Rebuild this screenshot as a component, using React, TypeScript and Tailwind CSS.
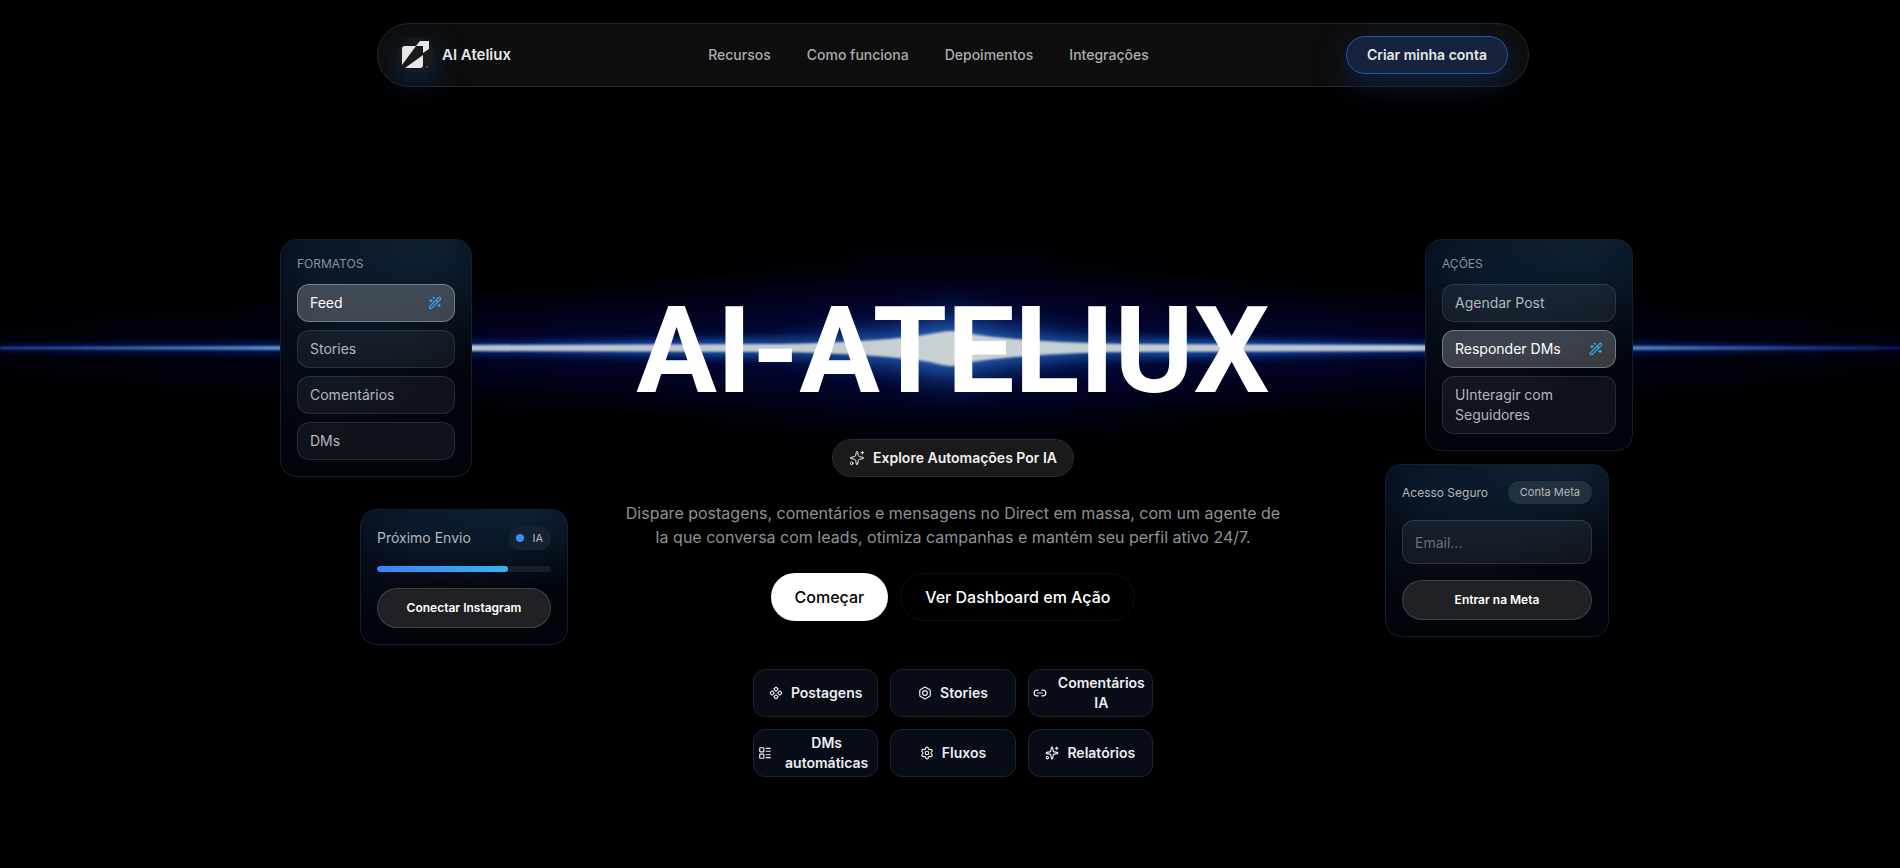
import React from "react";
import {
  Bolt,
  Component,
  LayoutList,
  Link2,
  Settings,
  Sparkles,
  WandSparkles,
} from "lucide-react";

const navLinks = ["Recursos", "Como funciona", "Depoimentos", "Integrações"];

const features = [
  { label: "Postagens", icon: Component },
  { label: "Stories", icon: Bolt },
  { label: "Comentários IA", icon: Link2 },
  { label: "DMs automáticas", icon: LayoutList },
  { label: "Fluxos", icon: Settings },
  { label: "Relatórios", icon: Sparkles },
];

const cardStyle =
  "rounded-2xl border border-[#161d2b] p-4 bg-[radial-gradient(ellipse_90%_60%_at_75%_0%,#0d2134_0%,transparent_100%),radial-gradient(ellipse_70%_70%_at_25%_15%,#081424_0%,transparent_100%)] bg-[#02040b]";

const Logo = () => (
  <span className="flex h-9 w-9 items-center justify-center rounded-full bg-[#1a1a1a] shadow-[0_8px_30px_#0f2c58]">
    <svg viewBox="0 0 36 36" className="h-9 w-9" aria-hidden="true">
      <path
        d="M7 9H18L4 28V12Q4 9 7 9zM22 4H31V12L25 16V9H18zM25 18V28Q25 31 22 31H7z"
        fill="#e5e7eb"
      />
      <circle cx="29" cy="30" r="1" fill="#55585e" />
    </svg>
  </span>
);

const Beam = () => (
  <svg
    className="pointer-events-none absolute inset-x-0 top-[198px] h-[300px] w-full"
    viewBox="0 0 1900 300"
    preserveAspectRatio="none"
    aria-hidden="true"
  >
    <defs>
      <radialGradient id="halo">
        <stop offset="0" stopColor="#020c5c" stopOpacity="0.75" />
        <stop offset="0.35" stopColor="#020636" stopOpacity="0.6" />
        <stop offset="1" stopColor="#000010" stopOpacity="0" />
      </radialGradient>
      <radialGradient id="flare">
        <stop offset="0" stopColor="#3f86cc" />
        <stop offset="0.4" stopColor="#1c4a98" stopOpacity="0.8" />
        <stop offset="0.7" stopColor="#06205e" stopOpacity="0.45" />
        <stop offset="1" stopColor="#02081f" stopOpacity="0" />
      </radialGradient>
      <linearGradient id="edge">
        <stop offset="0" stopColor="#0a1c7a" />
        <stop offset="0.25" stopColor="#06309a" />
        <stop offset="0.5" stopColor="#1a63b4" />
        <stop offset="0.75" stopColor="#06309a" />
        <stop offset="1" stopColor="#06104a" />
      </linearGradient>
      <linearGradient id="core">
        <stop offset="0" stopColor="#2450a8" />
        <stop offset="0.14" stopColor="#5f97cf" />
        <stop offset="0.25" stopColor="#b9c2ca" />
        <stop offset="0.5" stopColor="#c9d1d4" />
        <stop offset="0.74" stopColor="#b9c6d0" />
        <stop offset="0.87" stopColor="#4a7fc4" />
        <stop offset="1" stopColor="#0f1f80" />
      </linearGradient>
      <filter id="soft" x="-10%" y="-100%" width="120%" height="300%">
        <feGaussianBlur stdDeviation="1" />
      </filter>
      <filter id="softer" x="-10%" y="-100%" width="120%" height="300%">
        <feGaussianBlur stdDeviation="4" />
      </filter>
    </defs>
    <ellipse cx="951" cy="150" rx="1250" ry="75" fill="url(#halo)" />
    <ellipse cx="951" cy="150" rx="800" ry="85" fill="url(#halo)" />
    <ellipse cx="951" cy="150" rx="400" ry="120" fill="url(#halo)" />
    <path
      d="M0 148L500 145L951 136L1400 145L1900 148V152L1400 155L951 164L500 155L0 152z"
      fill="url(#edge)"
      filter="url(#softer)"
    />
    <ellipse cx="951" cy="150" rx="220" ry="46" fill="url(#flare)" />
    <ellipse cx="951" cy="150" rx="90" ry="70" fill="url(#flare)" opacity="0.5" />
    <path
      d="M0 149L300 148L470 147L780 146Q880 144 930 136Q945 133 951 133Q957 133 972 136Q1022 144 1122 146L1430 147L1640 148L1900 149V151L1640 152L1430 153L1122 154Q1022 156 972 164Q957 168 951 168Q945 168 930 164Q880 156 780 154L470 153L300 152L0 151z"
      fill="url(#core)"
      filter="url(#soft)"
    />
  </svg>
);

type OptionCardProps = {
  title: string;
  options: string[];
  active: string;
  width: string;
};

const OptionCard = ({ title, options, active, width }: OptionCardProps) => (
  <div className={`${cardStyle} ${width}`}>
    <p className="mb-3 text-xs uppercase text-[#8d929b]">{title}</p>
    <div className="flex flex-col gap-2">
      {options.map((option) => (
        <button
          key={option}
          type="button"
          className={`flex w-full items-center justify-between rounded-xl border px-3 py-2 text-left text-sm ${
            option === active
              ? "border-white/30 bg-white/22 text-white"
              : "border-white/10 bg-white/6 text-[#b4b7bc]"
          }`}
        >
          {option}
          {option === active && (
            <WandSparkles className="h-3.5 w-3.5 text-[#38a9f8]" />
          )}
        </button>
      ))}
    </div>
  </div>
);

const Header = () => (
  <header className="mx-auto flex h-16 w-full max-w-6xl items-center justify-between rounded-full border border-[#27272a] bg-[#0d0d0d] px-5">
    <a href="#" className="flex items-center gap-2">
      <Logo />
      <span className="text-[15px] font-semibold text-[#e5e7eb]">
        AI Ateliux
      </span>
    </a>
    <nav className="flex items-center gap-9">
      {navLinks.map((link) => (
        <a key={link} href="#" className="text-sm font-medium text-[#a9adb3]">
          {link}
        </a>
      ))}
    </nav>
    <button
      type="button"
      className="h-[38px] rounded-full border border-[#2457a8] bg-[#17233c] px-5 text-sm font-semibold text-[#e5e7eb] shadow-[0_8px_30px_#0e2444]"
    >
      Criar minha conta
    </button>
  </header>
);

const App = () => {
  return (
    <div className="relative min-h-screen overflow-hidden bg-black pt-[23px] pl-1.5 font-[Inter,sans-serif]">
      <Beam />
      <div className="relative">
        <Header />
        <main className="mx-auto mt-[152px] flex w-full max-w-[1360px] items-start">
          <aside className="flex w-[296px] shrink-0 flex-col items-start gap-8 pl-[7px]">
            <OptionCard
              title="Formatos"
              options={["Feed", "Stories", "Comentários", "DMs"]}
              active="Feed"
              width="w-48"
            />
            <div className={`${cardStyle} ml-20 w-52`}>
              <div className="mb-4 flex items-center justify-between">
                <p className="text-sm text-[#b4b7bc]">Próximo Envio</p>
                <span className="flex h-6 items-center gap-2 rounded-full bg-[#142131] px-2 text-[11px] text-[#b4b7bc]">
                  <span className="h-2 w-2 rounded-full bg-[#3b8cf6]" />
                  IA
                </span>
              </div>
              <div className="mb-4 h-1.5 overflow-hidden rounded-full bg-white/8">
                <div className="h-full w-3/4 rounded-full bg-linear-to-r from-[#3b82f6] to-[#38b2ee]" />
              </div>
              <button
                type="button"
                className="h-10 w-full rounded-full border border-white/14 bg-[#202125] text-xs font-semibold text-white"
              >
                Conectar Instagram
              </button>
            </div>
          </aside>

          <section className="flex min-w-0 flex-1 flex-col items-center pt-[52px] text-center">
            <h1 className="font-[Roboto,sans-serif] text-[120px] leading-[120px] font-bold text-white">
              AI-ATELIUX
            </h1>
            <button
              type="button"
              className="mt-7 flex h-[38px] items-center gap-2 rounded-full border border-[#2c2c2e] bg-[#1a1a1a] px-4 text-sm font-semibold text-[#f1f1f3]"
            >
              <Sparkles className="h-4 w-4" strokeWidth={1.5} />
              Explore Automações Por IA
            </button>
            <p className="mt-6 w-[672px] text-base text-[#8f9196]">
              Dispare postagens, comentários e mensagens no Direct em massa, com
              um agente de Ia que conversa com leads, otimiza campanhas e mantém
              seu perfil ativo 24/7.
            </p>
            <div className="mt-6 flex items-center gap-3">
              <button
                type="button"
                className="h-12 rounded-full bg-white px-6 text-base font-medium text-black"
              >
                Começar
              </button>
              <button
                type="button"
                className="h-12 rounded-full border border-[#0f0f10] px-6 text-base font-medium text-white"
              >
                Ver Dashboard em Ação
              </button>
            </div>
            <div className="mt-12 grid w-[400px] grid-cols-3 gap-3">
              {features.map(({ label, icon: Icon }) => (
                <button
                  key={label}
                  type="button"
                  className="flex h-12 items-center justify-center gap-2 rounded-xl border border-[#1e222c] bg-[#070c17] px-1 text-sm font-semibold text-[#eceef1]"
                >
                  <Icon className="h-3.5 w-3.5 shrink-0" />
                  <span>{label}</span>
                </button>
              ))}
            </div>
          </section>

          <aside className="flex w-[296px] shrink-0 flex-col items-end gap-[13px]">
            <OptionCard
              title="Ações"
              options={[
                "Agendar Post",
                "Responder DMs",
                "UInteragir com Seguidores",
              ]}
              active="Responder DMs"
              width="w-52"
            />
            <div className={`${cardStyle} mr-6 w-56`}>
              <div className="mb-4 flex items-center justify-between">
                <label htmlFor="email" className="text-xs text-[#b4b7bc]">
                  Acesso Seguro
                </label>
                <span className="flex h-[23px] items-center rounded-full bg-[#22313d] px-3 text-[11px] text-[#b4b7bc]">
                  Conta Meta
                </span>
              </div>
              <input
                id="email"
                type="email"
                placeholder="Email..."
                className="mb-4 block h-11 w-full rounded-xl border border-white/12 bg-white/6 px-3 text-sm text-white placeholder:text-[#6b6f7b]"
              />
              <button
                type="button"
                className="h-10 w-full rounded-full border border-white/14 bg-[#202125] text-xs font-semibold text-white"
              >
                Entrar na Meta
              </button>
            </div>
          </aside>
        </main>
      </div>
    </div>
  );
};

export default App;
